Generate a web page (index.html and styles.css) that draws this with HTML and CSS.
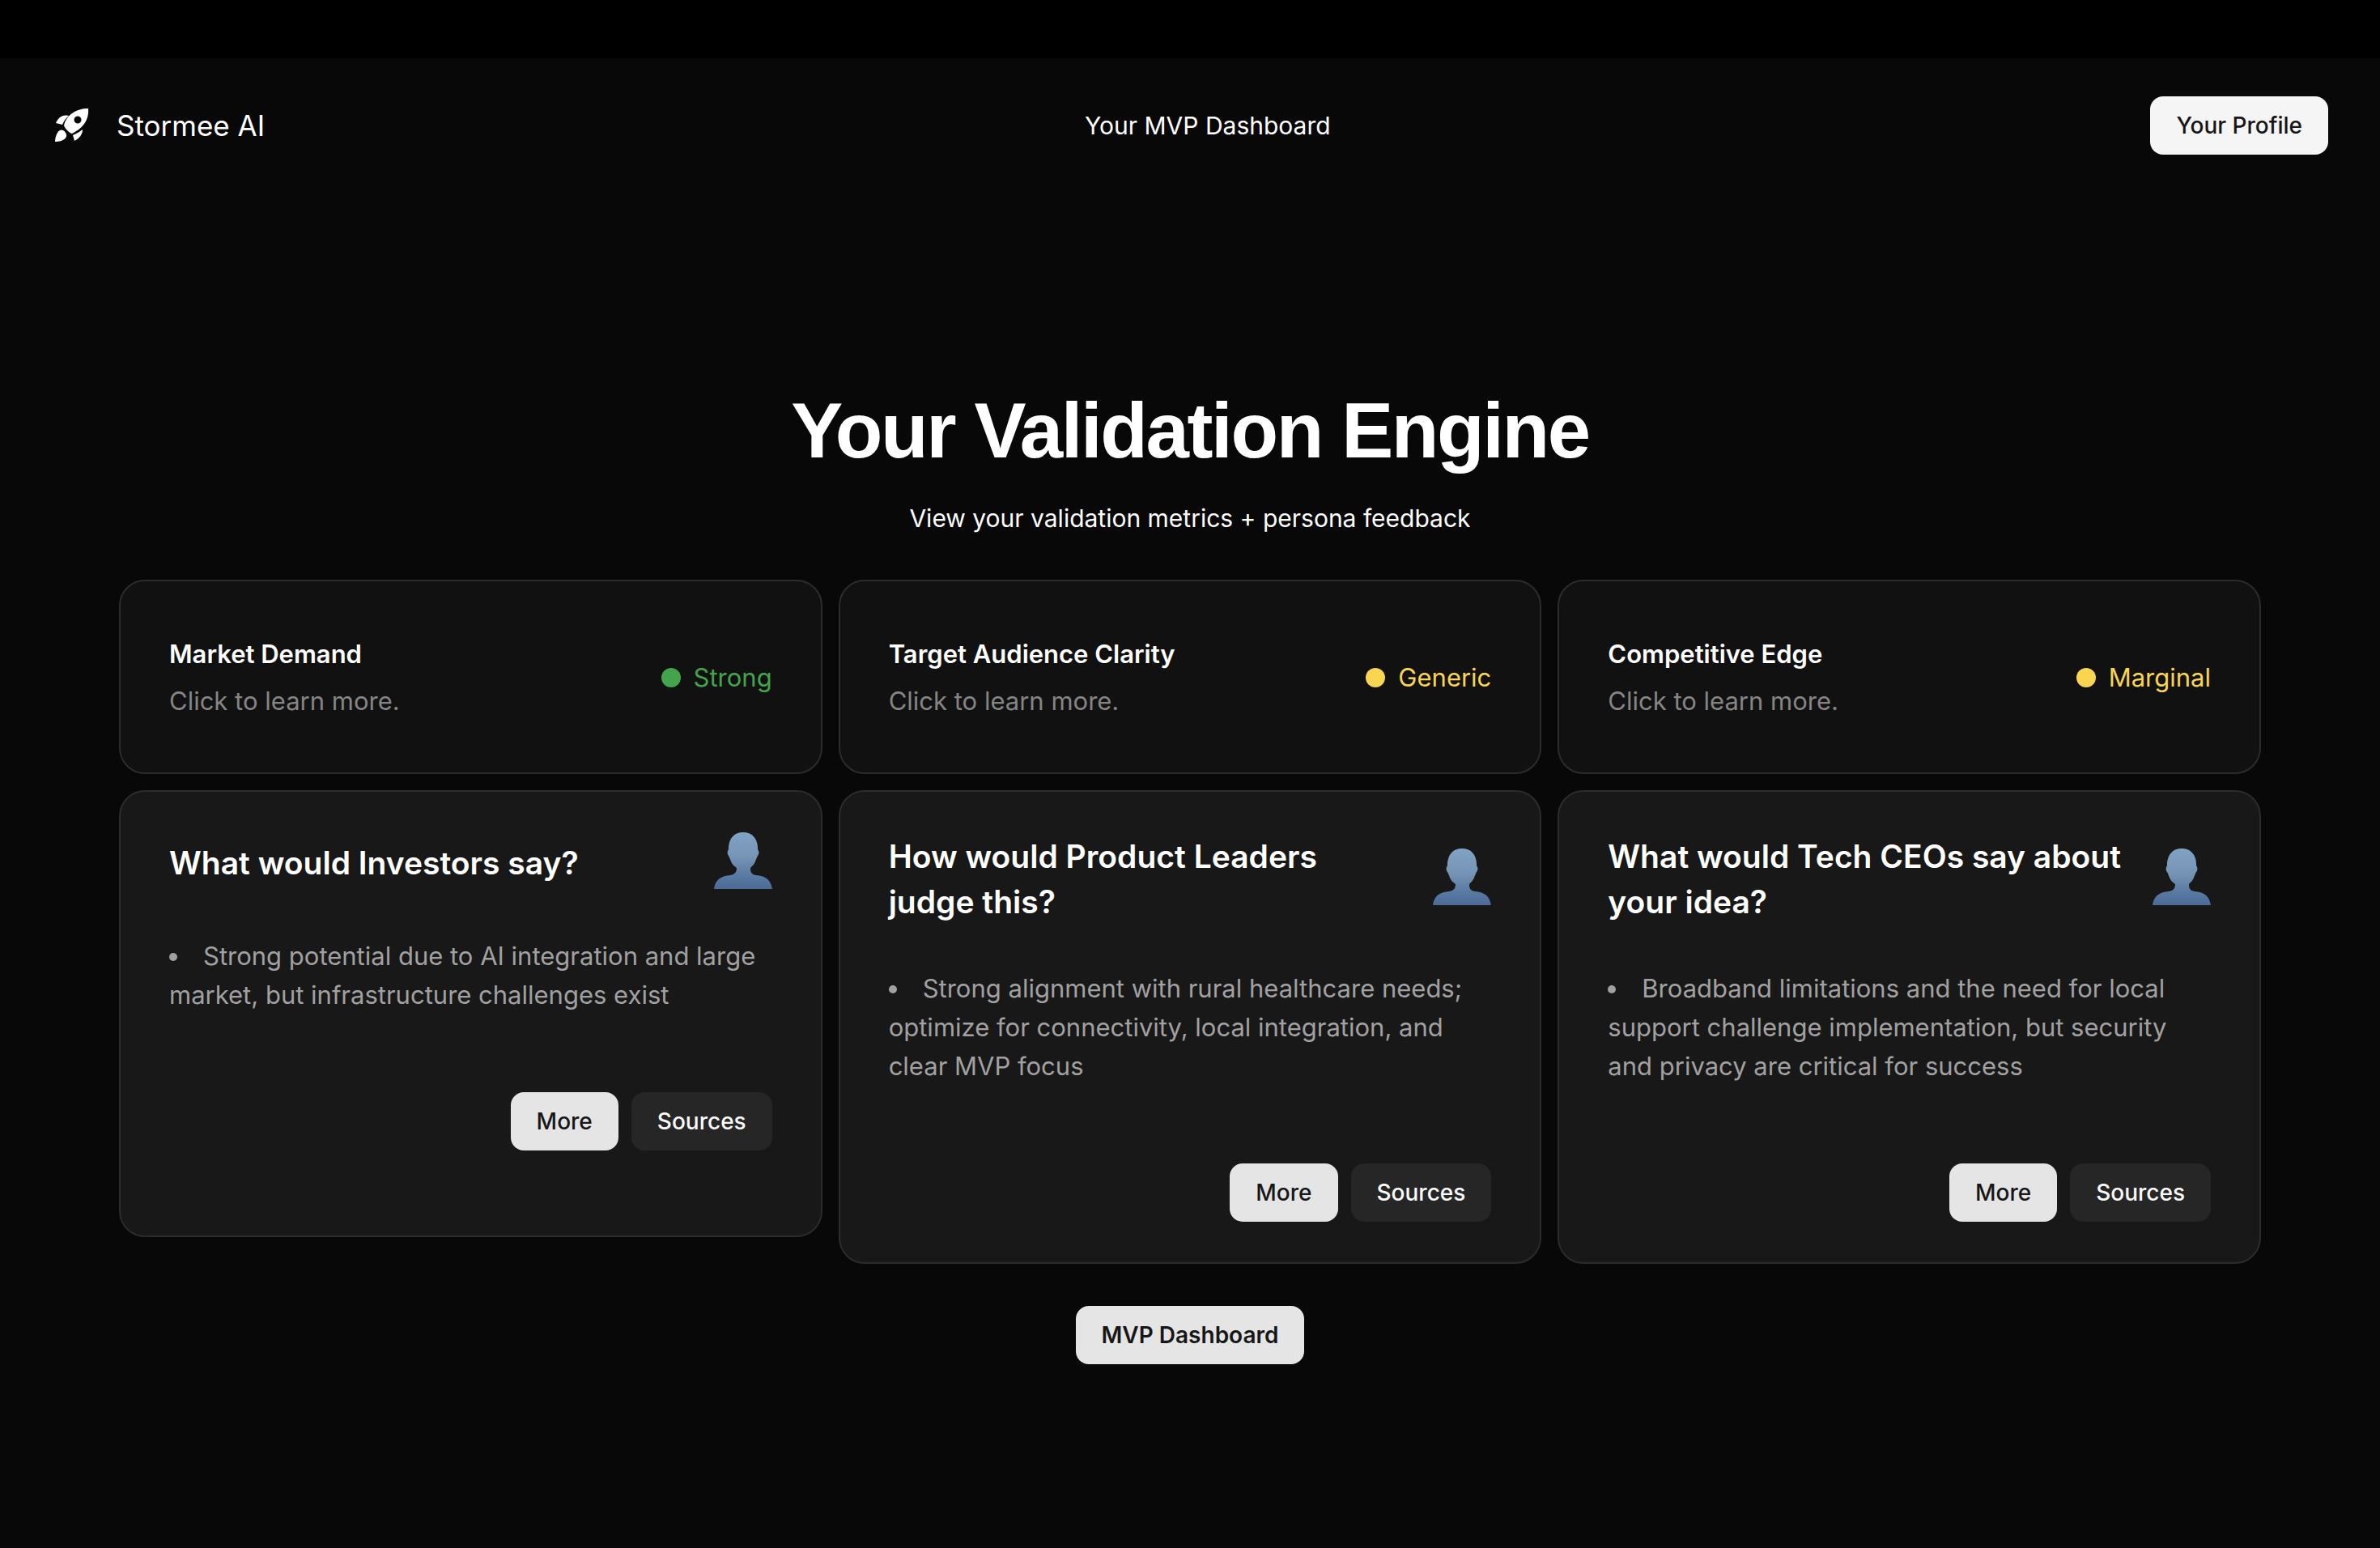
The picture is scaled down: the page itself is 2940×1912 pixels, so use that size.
FILE: index.html
```html
<!DOCTYPE html>
<html lang="en">
<head>
<meta charset="utf-8">
<meta name="viewport" content="width=device-width, initial-scale=1">
<title>Stormee AI</title>
<link rel="stylesheet" href="styles.css">
</head>
<body>
<svg class="defs" aria-hidden="true">
  <defs>
    <linearGradient id="bust-fill" x1="0" y1="0" x2="0" y2="1">
      <stop offset="0" stop-color="#82a3c4"/>
      <stop offset="0.45" stop-color="#7593b5"/>
      <stop offset="0.75" stop-color="#5a7ba3"/>
      <stop offset="1" stop-color="#4b6b95"/>
    </linearGradient>
    <symbol id="bust" viewBox="0 0 72 76">
      <path fill="url(#bust-fill)" d="M36 0C47 0 53 7 54 18C54 20 54 22 55 23C56 25 55 28 54 29C53 31 52 33 51 36C50 39 47 42 45 44C45 49 46 52 52 53C62 54 70 57 72 70H0C2 57 10 54 20 53C26 52 28 49 28 44C25 42 22 39 21 36C20 33 19 31 18 29C17 28 16 25 17 23C18 22 18 20 18 18C19 7 25 0 36 0Z"/>
    </symbol>
  </defs>
</svg>
<div class="topstrip"></div>
<header class="navbar">
  <a class="brand" href="#">
    <svg class="brand-icon" viewBox="-4 -2 46 46" aria-hidden="true">
      <path fill="#fff" fill-rule="evenodd" d="M41 0C42 12 37 23 21 31C19 31 12 25 11 21C14 8 26 0 41 0ZM28 9.500A4.500 4.500 0 1 0 28 18.500A4.500 4.500 0 1 0 28 9.500Z"/>
      <path fill="#fff" d="M17 9Q12 13 9 20L1 18C4 12 8 7 17 9ZM34 26C34 32 30 37 24 40L22 33Q29 30 34 26ZM3 30C5 26 10 25 13 30C17 36 10 41 0 41C0 37 1 33 3 30Z"/>
    </svg>
    <span>Stormee AI</span>
  </a>
  <span class="page-name">Your MVP Dashboard</span>
  <button class="btn btn-profile" type="button">Your Profile</button>
</header>
<main class="main">
  <h1 class="title">Your Validation Engine</h1>
  <p class="subtitle">View your validation metrics + persona feedback</p>
  <div class="grid">
    <section class="metric">
      <div class="metric-text">
        <h2 class="metric-name">Market Demand</h2>
        <p class="metric-hint">Click to learn more.</p>
      </div>
      <span class="status status-strong">Strong</span>
    </section>
    <section class="metric">
      <div class="metric-text">
        <h2 class="metric-name">Target Audience Clarity</h2>
        <p class="metric-hint">Click to learn more.</p>
      </div>
      <span class="status status-weak">Generic</span>
    </section>
    <section class="metric">
      <div class="metric-text">
        <h2 class="metric-name">Competitive Edge</h2>
        <p class="metric-hint">Click to learn more.</p>
      </div>
      <span class="status status-weak">Marginal</span>
    </section>
    <article class="persona">
      <div class="persona-head">
        <h2 class="persona-name">What would Investors say?</h2>
        <svg class="bust" aria-hidden="true"><use href="#bust"/></svg>
      </div>
      <ul class="feedback"><li>Strong potential due to AI integration and large market, but infrastructure challenges exist</li></ul>
      <div class="actions">
        <button class="btn btn-light" type="button">More</button>
        <button class="btn btn-dark" type="button">Sources</button>
      </div>
    </article>
    <article class="persona">
      <div class="persona-head">
        <h2 class="persona-name">How would Product Leaders judge this?</h2>
        <svg class="bust" aria-hidden="true"><use href="#bust"/></svg>
      </div>
      <ul class="feedback"><li>Strong alignment with rural healthcare needs; optimize for connectivity, local integration, and clear MVP focus</li></ul>
      <div class="actions">
        <button class="btn btn-light" type="button">More</button>
        <button class="btn btn-dark" type="button">Sources</button>
      </div>
    </article>
    <article class="persona">
      <div class="persona-head">
        <h2 class="persona-name">What would Tech CEOs say about your idea?</h2>
        <svg class="bust" aria-hidden="true"><use href="#bust"/></svg>
      </div>
      <ul class="feedback"><li>Broadband limitations and the need for local support challenge implementation, but security and privacy are critical for success</li></ul>
      <div class="actions">
        <button class="btn btn-light" type="button">More</button>
        <button class="btn btn-dark" type="button">Sources</button>
      </div>
    </article>
  </div>
  <button class="btn btn-light btn-strong" type="button">MVP Dashboard</button>
</main>
</body>
</html>
```
FILE: styles.css
```css
* {
  box-sizing: border-box;
}

body {
  margin: 0;
  min-height: 100vh;
  background: #080808;
  color: #fff;
  font-family: Inter, "Noto Sans", sans-serif;
  font-size: 31px;
  line-height: 48px;
}

h1, h2, p, ul {
  margin: 0;
}

.defs {
  position: absolute;
  width: 0;
  height: 0;
}

.topstrip {
  height: 72px;
  background: #000;
}

.navbar {
  display: flex;
  align-items: center;
  justify-content: space-between;
  padding: 47px 64px 48px;
}

.brand {
  display: flex;
  align-items: center;
  gap: 34px;
  color: #fff;
  font-size: 35px;
  text-decoration: none;
}

.brand-icon {
  width: 46px;
  height: 46px;
}

.btn {
  height: 72px;
  padding: 0 32px;
  border: 0;
  border-radius: 16px;
  font-family: inherit;
  font-size: 28px;
  font-weight: 500;
  line-height: 40px;
}

.btn-profile {
  background: #f5f5f5;
  color: #171717;
}

.btn-light {
  background: #e5e5e5;
  color: #171717;
}

.btn-dark {
  background: #262626;
  color: #fafafa;
}

.btn-strong {
  font-weight: 600;
}

.main {
  display: flex;
  flex-direction: column;
  align-items: center;
  padding: 245px 5% 96px;
}

.title {
  font-family: "Liberation Sans", Arial, sans-serif;
  font-size: 96px;
  font-weight: 700;
  line-height: 96px;
  letter-spacing: -0.025em;
}

.page-name,
.subtitle {
  font-size: 30px;
}

.subtitle {
  margin: 36px 0 52px;
}

.grid {
  display: grid;
  grid-template-columns: repeat(3, minmax(0, 1fr));
  align-items: start;
  gap: 20px;
  width: 100%;
  margin-bottom: 52px;
}

.metric,
.persona {
  border: 2px solid #2c2c2c;
  border-radius: 32px;
}

.metric {
  display: flex;
  align-items: center;
  justify-content: space-between;
  min-height: 240px;
  padding: 50px 60px 48px;
  background: #111;
}

.metric-text {
  display: flex;
  flex-direction: column;
  gap: 10px;
}

.metric-name {
  font-size: 31px;
  font-weight: 600;
}

.metric-hint {
  color: #858585;
}

.status {
  display: flex;
  align-items: center;
  gap: 16px;
}

.status::before {
  content: "";
  width: 24px;
  height: 24px;
  border-radius: 50%;
  background: currentColor;
}

.status-strong {
  color: #43a44d;
}

.status-weak {
  color: #f9d552;
}

.persona {
  min-height: 552px;
  padding: 52px 60px 50px;
  background: #181818;
}

.persona-head {
  display: flex;
  align-items: center;
  justify-content: space-between;
  gap: 32px;
  min-height: 72px;
}

.persona-name {
  font-size: 39px;
  font-weight: 600;
  line-height: 56px;
}

.bust {
  flex: none;
  width: 72px;
  height: 76px;
  margin: -2px 0;
}

.feedback {
  margin-top: 55px;
  padding: 0;
  list-style-position: inside;
  color: #a1a1a1;
}

.actions {
  display: flex;
  justify-content: flex-end;
  gap: 16px;
  margin-top: 96px;
}
```
